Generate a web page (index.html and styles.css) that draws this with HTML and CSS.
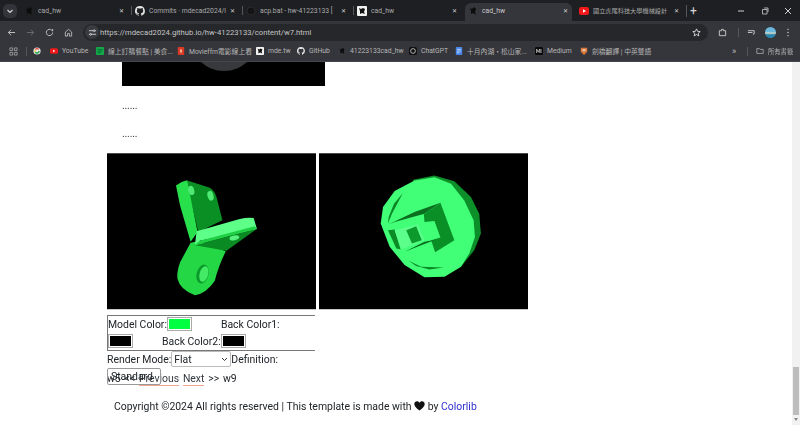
FILE: index.html
```html
<!DOCTYPE html>
<html lang="en">
<head>
<meta charset="utf-8">
<title>cad_hw</title>
<link rel="stylesheet" href="styles.css">
</head>
<body>
<div class="window">
  <header class="chrome">
    <div class="tabstrip">
      <span class="tab-list-btn"><svg width="8" height="8" viewBox="0 0 8 8"><path d="M1.5 3 4 5.5 6.5 3" fill="none" stroke="#d5d5d5" stroke-width="1.2"/></svg></span>
      <div class="tab"><svg class="fav" viewBox="0 0 10 10"><path d="M2 2 4 3 6 1 8 3 7 6 8 9 5 7 3 8 3 5z" fill="#0c0c0c"/></svg><span class="tab-title">cad_hw</span><span class="tab-x">✕</span></div>
      <div class="tab sep"><svg class="fav" viewBox="0 0 16 16"><path fill="#e4e4e4" d="M8 0a8 8 0 0 0-2.5 15.6c.4.1.5-.2.5-.4v-1.4c-2.2.5-2.7-1-2.7-1-.4-.9-.9-1.2-.9-1.2-.7-.5.1-.5.1-.5.8.1 1.2.8 1.2.8.7 1.2 1.9.9 2.3.7.1-.5.3-.9.5-1.1-1.8-.2-3.6-.9-3.6-4 0-.9.3-1.6.8-2.1-.1-.2-.4-1 .1-2.1 0 0 .7-.2 2.2.8a7.600 7.600 0 0 1 4 0c1.500-1 2.200-.8 2.200-.8.400 1.100.200 1.900.100 2.100.500.600.800 1.300.800 2.100 0 3.100-1.900 3.700-3.700 3.900.300.300.600.800.600 1.500v2.200c0 .2.100.5.600.4A8 8 0 0 0 8 0z"/></svg><span class="tab-title">Commits · mdecad2024/l</span><span class="tab-x">✕</span></div>
      <div class="tab sep"><svg class="fav" viewBox="0 0 10 10"><circle cx="5" cy="5" r="4" fill="#141414" stroke="#2a2a2a"/></svg><span class="tab-title">acp.bat - hw-41223133 [</span><span class="tab-x">✕</span></div>
      <div class="tab sep"><svg class="fav" viewBox="0 0 10 10"><rect width="10" height="10" rx="1" fill="#f2f2f2"/><path d="M2 2 4 3 6 2 8 3 7 6 8 8 5 7 3 8 3 5z" fill="#111"/></svg><span class="tab-title">cad_hw</span><span class="tab-x">✕</span></div>
      <div class="tab active"><svg class="fav" viewBox="0 0 10 10"><path d="M2 2 4 3 6 1 8 3 7 6 8 9 5 7 3 8 3 5z" fill="#0c0c0c"/></svg><span class="tab-title">cad_hw</span><span class="tab-x">✕</span></div>
      <div class="tab"><svg class="fav" viewBox="0 0 10 8"><rect width="10" height="8" rx="2" fill="#f01818"/><path d="M4 2.200 7 4 4 5.800z" fill="#fff"/></svg><span class="tab-title tab-title-cjk">國立虎尾科技大學機械設計</span><span class="tab-x">✕</span></div>
      <span class="new-tab">+</span>
      <div class="win-btns">
        <svg width="8" height="8" viewBox="0 0 8 8"><path d="M1 4h6" stroke="#cfcfcf"/></svg>
        <svg width="8" height="8" viewBox="0 0 8 8"><path d="M1.500 2.500h4.500v4.500h-4.500zM3 1h4v4" fill="none" stroke="#cfcfcf" stroke-width=".8"/></svg>
        <svg width="8" height="8" viewBox="0 0 8 8"><path d="M1 1l6 6M7 1l-6 6" stroke="#cfcfcf"/></svg>
      </div>
    </div>
    <div class="toolbar">
      <svg class="tool" viewBox="0 0 10 10"><path d="M9 5H1.500M4.500 2 1.500 5l3 3" fill="none" stroke="#c9c9c9"/></svg>
      <svg class="tool" viewBox="0 0 10 10"><path d="M1 5h7.500M5.500 2l3 3-3 3" fill="none" stroke="#6f7074"/></svg>
      <svg class="tool" viewBox="0 0 10 10"><path d="M8.500 5a3.500 3.500 0 1 1-1-2.500L8.500 3.500V1" fill="none" stroke="#c9c9c9"/></svg>
      <svg class="tool" viewBox="0 0 10 10"><path d="M1.500 4.500 5 1.500l3.500 3V9H6V6H4v3H1.500z" fill="none" stroke="#c9c9c9" stroke-width=".9"/></svg>
      <div class="omnibox">
        <span class="site-btn"><svg width="9" height="9" viewBox="0 0 10 10"><path d="M1 3h5M8 3h1M1 7h1M4 7h5" stroke="#d5d5d5"/><circle cx="7" cy="3" r="1" fill="none" stroke="#d5d5d5"/><circle cx="3" cy="7" r="1" fill="none" stroke="#d5d5d5"/></svg></span>
        <span class="url">https://mdecad2024.github.io/hw-41223133/content/w7.html</span>
        <svg class="star" width="9" height="9" viewBox="0 0 10 10"><path d="M5 1l1.200 2.700 2.900.3-2.200 1.900.7 2.900L5 7.300 2.400 8.800l.7-2.900L.9 4l2.900-.3z" fill="none" stroke="#dcdcdc"/></svg>
      </div>
      <svg class="tool ext" viewBox="0 0 10 10"><path d="M1.500 3H4V1.500h2V3h2.500v5.500h-7z" fill="none" stroke="#cfcfcf"/></svg>
      <span class="tool-sep"></span>
      <svg class="tool media" viewBox="0 0 10 10"><path d="M1 3h7M1 5h5M8 3v3.500l-1.500.500" fill="none" stroke="#cfcfcf"/></svg>
      <span class="avatar"></span>
      <svg class="tool menu" viewBox="0 0 4 10"><circle cx="2" cy="1.500" r=".8" fill="#cfcfcf"/><circle cx="2" cy="5" r=".8" fill="#cfcfcf"/><circle cx="2" cy="8.500" r=".8" fill="#cfcfcf"/></svg>
    </div>
    <nav class="bookmarks">
      <svg class="bm-apps" viewBox="0 0 10 10"><path d="M1 1h3v3H1zM6 1h3v3H6zM1 6h3v3H1zM6 6h3v3H6z" fill="none" stroke="#c4c4c4" stroke-width=".7"/></svg>
      <span class="bm-sep"></span>
      <span class="bm bm-google"><svg class="bm-ico" viewBox="0 0 10 10"><circle cx="5" cy="5" r="4.500" fill="#e8e8e8"/><path d="M5 5h3.500A3.500 3.500 0 0 1 2 7z" fill="#34a853"/><path d="M2 3a3.500 3.500 0 0 1 6 0z" fill="#ea4335"/><path d="M2 3 2 7 4 5z" fill="#fbbc05"/><circle cx="5" cy="5" r="1.500" fill="#e8e8e8"/></svg></span>
      <span class="bm bm-yt"><svg class="bm-ico" viewBox="0 0 10 8"><rect width="10" height="7" y=".5" rx="2" fill="#f01818"/><path d="M4 2.500 6.500 4 4 5.500z" fill="#fff"/></svg>YouTube</span>
      <span class="bm bm-order"><svg class="bm-ico" viewBox="0 0 10 10"><rect width="10" height="10" rx="1" fill="#12a84a"/><path d="M2 3h6M2 5h6M2 7h4" stroke="#063"/></svg>線上訂購餐點 | 美食...</span>
      <span class="bm bm-movie"><svg class="bm-ico" viewBox="0 0 10 10"><rect x="1" width="8" height="10" rx="1" fill="#d83a26"/><rect x="4" y="3" width="2" height="4" fill="#f5c9a8"/></svg>Movieffm電影線上看</span>
      <span class="bm bm-mde"><svg class="bm-ico" viewBox="0 0 10 10"><rect width="10" height="10" rx="1" fill="#f2f2f2"/><path d="M2 2 4 3 6 2 8 3 7 6 8 8 5 7 3 8 3 5z" fill="#111"/></svg>mde.tw</span>
      <span class="bm bm-gh"><svg class="bm-ico" viewBox="0 0 16 16"><path fill="#e4e4e4" d="M8 0a8 8 0 0 0-2.500 15.600c.4.100.5-.2.500-.4v-1.400c-2.200.5-2.700-1-2.700-1-.4-.9-.9-1.200-.9-1.200-.7-.5.100-.5.100-.5.800.1 1.200.8 1.200.8.700 1.200 1.900.9 2.300.7.100-.5.300-.9.500-1.100-1.800-.2-3.600-.9-3.600-4 0-.9.300-1.600.8-2.100-.1-.2-.4-1 .1-2.100 0 0 .7-.2 2.200.8a7.600 7.600 0 0 1 4 0c1.500-1 2.200-.8 2.200-.8.400 1.100.2 1.900.1 2.100.5.600.8 1.300.8 2.100 0 3.100-1.900 3.700-3.700 3.900.3.300.6.800.6 1.500v2.200c0 .2.100.5.600.4A8 8 0 0 0 8 0z"/></svg>GitHub</span>
      <span class="bm bm-cad"><svg class="bm-ico" viewBox="0 0 10 10"><path d="M2 2 4 3 6 1 8 3 7 6 8 9 5 7 3 8 3 5z" fill="#0c0c0c"/></svg>41223133cad_hw</span>
      <span class="bm bm-gpt"><svg class="bm-ico" viewBox="0 0 10 10"><rect width="10" height="10" rx="2" fill="#111"/><circle cx="5" cy="5" r="3" fill="none" stroke="#cfcfcf"/></svg>ChatGPT</span>
      <span class="bm bm-doc"><svg class="bm-ico" viewBox="0 0 10 10"><rect x="1" width="8" height="10" rx="1" fill="#4a86e8"/><path d="M2.500 3h5M2.500 5h5M2.500 7h3" stroke="#fff" stroke-width=".7"/></svg>十月內湖・松山家...</span>
      <span class="bm bm-med"><svg class="bm-ico" viewBox="0 0 10 10"><rect width="10" height="10" rx="1.500" fill="#0a0a0a"/><path d="M2 7.500V2.500l2 4 2-4v5M7.500 2.500v5" fill="none" stroke="#eee" stroke-width=".8"/></svg>Medium</span>
      <span class="bm bm-cam"><svg class="bm-ico" viewBox="0 0 10 10"><path d="M1 1h8v5l-4 4-4-4z" fill="#d9793f"/><path d="M3 3h4v2H3z" fill="#f0d8c0"/></svg>劍橋翻譯 | 中英雙語</span>
      <span class="bm-more">»</span>
      <span class="bm-sep"></span>
      <span class="bm bm-all"><svg class="bm-ico" viewBox="0 0 10 10"><path d="M1 2h3l1 1h4v5H1z" fill="none" stroke="#c9c9c9" stroke-width=".8"/></svg>所有書籤</span>
    </nav>
  </header>
  <div class="viewport">
    <main class="page">
      <div class="top-image"><span class="top-disc"></span></div>
      <p class="dots">......</p>
      <p class="dots">......</p>
      <div class="canvases">
        <svg class="canvas" viewBox="20 8 630 470">
          <rect x="20" y="8" width="630" height="470" fill="#000"/>
          <path d="M262 90 330 112 Q345 122 350 140 L368 210 295 245 268 130z" fill="#0a8f24"/>
          <path d="M228 105 Q245 92 262 89 L270 130 293 245 272 275 240 165z" fill="#28df4c"/>
          <path d="M272 278 300 272 378 303 Q355 350 345 392 Q320 430 285 436 Q240 420 232 385 Q230 350 250 318z" fill="#23d745"/>
          <path d="M285 285 470 237 380 302z" fill="#0a8a22"/>
          <path d="M290 243 420 206 Q445 200 462 203 L472 236 300 272 285 285z" fill="#5dff88"/>
          <path d="M300 272 465 228 472 236 285 285z" fill="#1fd044"/>
          <ellipse cx="274" cy="120" rx="9" ry="14" transform="rotate(-15 274 120)" fill="#4fe872"/>
          <ellipse cx="332" cy="136" rx="9" ry="15" transform="rotate(-15 332 136)" fill="#4fe872"/>
          <ellipse cx="404" cy="263" rx="15" ry="7" transform="rotate(-12 404 263)" fill="#58f07c"/>
          <ellipse cx="308" cy="372" rx="18" ry="29" transform="rotate(15 308 372)" fill="#0c9a2a"/>
          <ellipse cx="312" cy="372" rx="13" ry="24" transform="rotate(15 312 372)" fill="#42ea66"/>
        </svg>
        <svg class="canvas" viewBox="12 8 630 470">
          <rect x="12" y="8" width="630" height="470" fill="#000"/>
          <path d="M295 88 360 75 420 92 470 140 495 190 500 250 480 300 440 350 390 380z" fill="#0c8f28"/>
          <path d="M205 170 240 122 300 90 360 80 410 100 450 150 478 210 482 260 465 310 440 350 390 380 330 382 270 345 225 290 198 220z" fill="#41ff77"/>
          <path d="M265 128 238 160 222 200 220 220 232 190z" fill="#0b8726"/>
          <path d="M222 222 300 185 378 157 330 190 240 215z" fill="#0b6f20"/>
          <path d="M378 157 420 270 362 306 350 270 378 262 360 212 330 215 328 192z" fill="#0a8f26"/>
          <path d="M220 240 240 238 258 298 245 295z" fill="#0b8a26"/>
          <path d="M240 240 310 222 330 270 260 298z" fill="#5cff8c"/>
          <path d="M275 240 305 228 322 270 292 280z" fill="#0c9a2c"/>
          <path d="M270 305 365 268 330 275 300 290z" fill="#0a6e20"/>
          <path d="M282 332 320 350 388 352 345 358 305 348z" fill="#0b8726"/>
        </svg>
      </div>
      <div class="controls-box">
        <div class="ctl-row">
          <label class="ctl">Model Color:<span class="swatch swatch-green"></span></label>
          <label class="ctl ctl-back1">Back Color1:</label>
        </div>
        <div class="ctl-row">
          <span class="swatch"></span>
          <label class="ctl ctl-back2">Back Color2:<span class="swatch"></span></label>
        </div>
      </div>
      <div class="render-row">
        <label class="ctl">Render Mode:</label>
        <span class="select select-flat">Flat<svg width="7" height="5" viewBox="0 0 7 5"><path d="M1 1l2.500 2.500L6 1" fill="none" stroke="#333"/></svg></span>
        <label class="ctl">Definition:</label>
      </div>
      <div class="pager">
        <span class="select select-std">Standard</span>
        w5 &lt;&lt; <a class="plink">Previous</a> <a class="plink">Next</a> &gt;&gt; w9
      </div>
      <footer class="copyright">Copyright ©2024 All rights reserved | This template is made with <svg class="heart" viewBox="0 0 12 11"><path d="M6 10.500C2 7.500 .3 5.500.3 3.300.3 1.500 1.700.3 3.300.3 4.500.3 5.500 1 6 2 6.500 1 7.500.3 8.700.3c1.600 0 3 1.200 3 3 0 2.200-1.700 4.200-5.700 7.200z" fill="#111"/></svg> by <a class="colorlib">Colorlib</a></footer>
    </main>
    <aside class="scrollbar"><span class="thumb"></span><span class="arrow"></span></aside>
  </div>
</div>
</body>
</html>
```
FILE: styles.css
```css
* { box-sizing: border-box; }
html, body { margin: 0; height: 100%; overflow: hidden; background: #fff; }
.window { width: 800px; height: 425px; display: flex; flex-direction: column; filter: blur(.35px); font-family: Roboto, "Noto Sans CJK TC", sans-serif; }
.chrome { flex: none; height: 62px; background: #35363b; color: #bdbdbd; font-size: 6.800px; display: flex; flex-direction: column; border-bottom: 1px solid #46474c; }
.tabstrip { height: 21px; background: #1e1f23; display: flex; align-items: center; padding-top: 3px; }
.tab-list-btn { width: 14px; height: 14px; margin: 0 4px 3px 3px; background: #33343a; border-radius: 5px; display: flex; align-items: center; justify-content: center; }
.tab { width: 111px; height: 18px; display: flex; align-items: center; padding: 0 4px 3px 3px; position: relative; flex: none; }
.tab-title { margin-left: 4px; white-space: nowrap; width: 77px; color: #a9a9a9; }
.tab-title-cjk { font-size: 6.200px; }
.tab-x { font-size: 6px; width: 10px; text-align: center; color: #d0d0d0; margin-left: auto; margin-right: 2px; }
.fav { width: 10px; height: 10px; flex: none; }
.tab.sep::before { content: ""; position: absolute; left: -1px; top: 3px; height: 9px; width: 1px; background: #55565a; }
.tab.active { background: #35363b; border-radius: 6px 6px 0 0; width: 107px; margin-right: 4px; }
.tab.active .tab-x { margin-right: -2px; }
.tab.active .tab-title { color: #c9c9c9; }
.new-tab { font-size: 12px; color: #d8d8d8; width: 14px; margin-left: -1px; margin-bottom: 3px; text-align: center; line-height: 1; border-left: 1px solid #55565a; }
.win-btns { margin-left: auto; display: flex; gap: 15.500px; padding-right: 8px; margin-bottom: 3px; align-items: center; }
.toolbar { height: 19px; margin-top: 2px; display: flex; align-items: center; padding-left: 7px; }
.tool { width: 9px; height: 9px; flex: none; margin-right: 10px; }
.omnibox { flex: none; width: 625px; height: 17px; background: #26272b; border-radius: 9px; display: flex; align-items: center; padding-left: 2px; font-size: 7.700px; }
.site-btn { width: 14px; height: 14px; border-radius: 50%; background: #3a3b40; display: flex; align-items: center; justify-content: center; }
.url { margin-left: 1px; color: #c4c4c4; }
.star { margin-left: auto; margin-right: 7px; }
.tool.ext { margin-left: 10px; margin-right: 11px; }
.tool-sep { width: 1px; height: 9px; background: #55565a; margin-right: 8px; }
.tool.media { margin-right: 9px; }
.avatar { width: 11px; height: 11px; border-radius: 50%; background: linear-gradient(#6cb8dc 45%, #e6e0c8 55%, #2b86ad 70%); flex: none; margin-right: 10px; }
.tool.menu { width: 4px; margin: 0; }
.bookmarks { height: 20px; display: flex; align-items: center; padding-left: 9px; white-space: nowrap; }
.bm-apps { width: 9px; height: 9px; margin-right: 8px; flex: none; }
.bm-sep { width: 1px; height: 9px; background: #55565a; flex: none; }
.bm { display: flex; align-items: center; flex: none; color: #b5b5b5; }
.bm-ico { width: 8px; height: 8px; margin-right: 4px; flex: none; }
.bm-google { margin-left: 6px; width: 17px; }
.bm-yt { width: 46px; }
.bm-order { width: 81px; }
.bm-movie { width: 79px; }
.bm-mde { width: 41px; }
.bm-gh { width: 41px; }
.bm-cad { width: 71px; }
.bm-gpt { width: 46px; }
.bm-doc { width: 80px; }
.bm-med { width: 45px; }
.bm-cam { width: 152px; }
.bm-more { width: 15px; flex: none; font-size: 9px; }
.bm-all { margin-left: 8px; font-size: 6.300px; }
.viewport { flex: 1; min-height: 0; display: flex; }
.page { flex: 1; min-width: 0; color: #212529; font-size: 10.450px; padding-left: 107px; position: relative; overflow: hidden; }
.top-image { width: 203px; height: 24px; margin-left: 15px; background: #000; display: flex; justify-content: center; overflow: hidden; }
.top-disc { flex: none; width: 68px; height: 68px; border-radius: 50%; background: #38393c; margin-top: -59px; }
.dots { margin: 0 0 0 15px; height: 28px; line-height: 12px; color: #333; padding-top: 14px; letter-spacing: -.2px; }
.canvases { display: flex; gap: 3px; margin-top: 11px; }
.canvas { width: 209px; height: 156.500px; display: block; flex: none; }
.controls-box { width: 208px; height: 36px; margin-top: 5px; border: 1px solid #777; border-right: 0; display: flex; flex-direction: column; }
.ctl-row { display: flex; align-items: center; height: 17px; }
.ctl { display: inline-flex; align-items: center; height: 17px; white-space: nowrap; }
.ctl-back1 { margin-left: 29px; }
.ctl-back2 { margin-left: 29px; }
.swatch { display: inline-block; width: 25px; height: 14px; background: #000; border: 2px solid #fff; outline: 1px solid #aaa; outline-offset: -1px; }
.swatch-green { background: #00ff41; }
.render-row { display: flex; align-items: center; height: 17px; }
.select { font-size: 10.450px; background: #fff; border: 1px solid #8a8a8a; border-radius: 2px; display: inline-flex; align-items: center; color: #212529; word-spacing: 0; }
.select-flat { width: 60px; height: 16px; padding: 0 2px; justify-content: space-between; border-color: #bbb; }
.pager { position: relative; height: 21px; line-height: 21px; white-space: nowrap; word-spacing: 1.200px; }
.select-std { position: absolute; left: 0; top: 0; width: 54px; height: 17px; padding-left: 3px; background: transparent; border-color: #999; overflow: hidden; }
.plink { color: #343a40; border-bottom: 1px solid #f0a58f; }
.copyright { margin: 8px 0 0 7px; white-space: nowrap; line-height: 20px; }
.heart { width: 11px; height: 10px; vertical-align: -1px; }
.colorlib { color: #2f2fd0; }
.scrollbar { flex: none; width: 8px; background: #f1f1f1; display: flex; flex-direction: column; }
.thumb { height: 48px; margin-top: auto; background: #bdbdbd; margin-left: 1px; margin-right: 1px; }
.arrow { height: 10px; display: flex; justify-content: center; padding-top: 3px; }
.arrow::before { content: ""; border: 2.500px solid transparent; border-top: 3px solid #888; border-bottom: 0; height: 0; width: 0; }
```
